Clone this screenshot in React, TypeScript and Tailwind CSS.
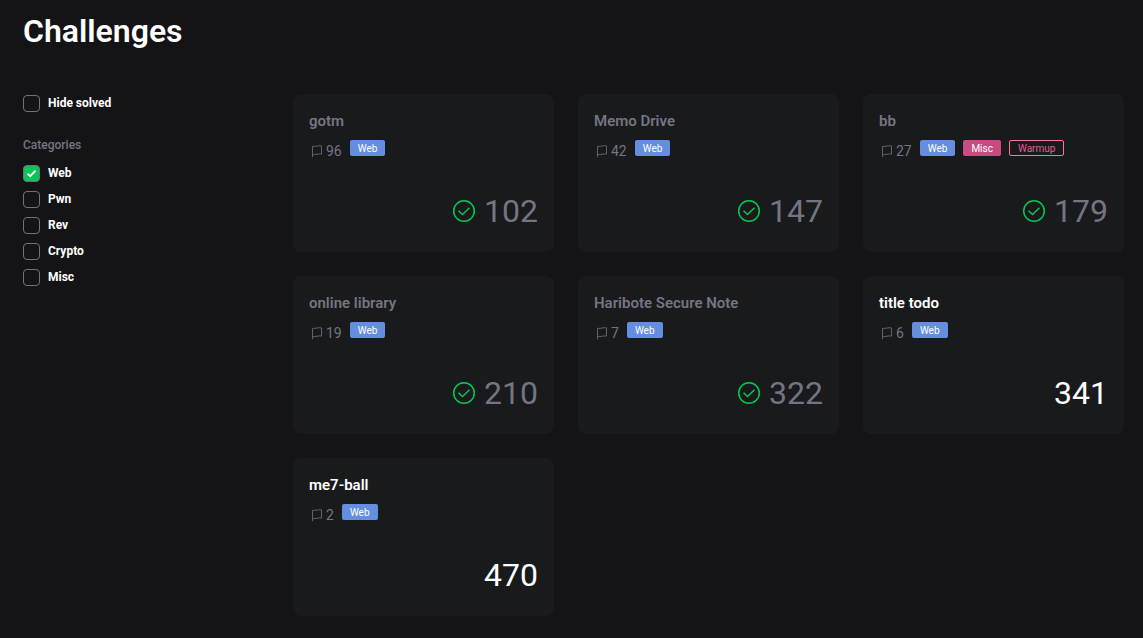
import React, { useState } from "react";

type Challenge = {
  title: string;
  solves: number;
  tags: string[];
  points: number;
  solved: boolean;
};

const categories = ["Web", "Pwn", "Rev", "Crypto", "Misc"];

const challenges: Challenge[] = [
  { title: "gotm", solves: 96, tags: ["Web"], points: 102, solved: true },
  { title: "Memo Drive", solves: 42, tags: ["Web"], points: 147, solved: true },
  { title: "bb", solves: 27, tags: ["Web", "Misc", "Warmup"], points: 179, solved: true },
  { title: "online library", solves: 19, tags: ["Web"], points: 210, solved: true },
  { title: "Haribote Secure Note", solves: 7, tags: ["Web"], points: 322, solved: true },
  { title: "title todo", solves: 6, tags: ["Web"], points: 341, solved: false },
  { title: "me7-ball", solves: 2, tags: ["Web"], points: 470, solved: false },
];

const tagStyles: Record<string, string> = {
  Web: "bg-[#658ee0] text-white",
  Misc: "bg-[#c84b82] text-white",
  Warmup: "border border-[#ff6fae] text-[#e75a9b]",
};

function Checkbox({
  label,
  checked,
  onChange,
}: {
  label: string;
  checked: boolean;
  onChange: (checked: boolean) => void;
}) {
  return (
    <label className="flex h-[18px] cursor-pointer items-center gap-2 text-xs font-bold text-white">
      <span className="grid size-[17px] shrink-0">
        <input
          type="checkbox"
          checked={checked}
          onChange={(e) => onChange(e.target.checked)}
          className="col-start-1 row-start-1 size-[17px] appearance-none rounded-[4px] border border-[#72717d] checked:bg-[#06c755]"
        />
        {checked && (
          <svg
            viewBox="0 0 17 17"
            className="pointer-events-none col-start-1 row-start-1 size-[17px]"
            fill="none"
            stroke="white"
            strokeWidth="2"
            aria-hidden="true"
          >
            <path d="M4.5 8.7 7.3 11.2 12.5 5.6" />
          </svg>
        )}
      </span>
      <span className="pb-px">{label}</span>
    </label>
  );
}

function FlagIcon() {
  return (
    <svg
      viewBox="0 0 16 16"
      className="size-4 shrink-0"
      fill="none"
      stroke="#62626a"
      strokeWidth="1"
      aria-hidden="true"
    >
      <path d="M3.5 14.2V3.3C6.5 3.9 9.5 2.1 12.5 2.9v8.2c-3-.8-6 1-9 .4" />
    </svg>
  );
}

function SolvedIcon() {
  return (
    <svg
      viewBox="0 0 24 24"
      className="size-6 shrink-0"
      fill="none"
      stroke="#06c755"
      strokeWidth="1.5"
      role="img"
      aria-label="Solved"
    >
      <circle cx="12" cy="12" r="10.3" />
      <path d="m6.5 11.7 4 3.8 7-6.7" />
    </svg>
  );
}

function ChallengeCard({ challenge }: { challenge: Challenge }) {
  const { title, solves, tags, points, solved } = challenge;
  const tone = solved ? "text-[#757483]" : "text-white";
  return (
    <article className="flex min-h-[158px] flex-col rounded-lg bg-[#191a1b] p-4">
      <h2 className={`text-[15px] leading-[22px] font-semibold ${tone}`}>{title}</h2>
      <div className="mt-2 flex items-start gap-2">
        <div className="flex items-center gap-px pt-px text-sm text-[#757483]">
          <FlagIcon />
          <span>{solves}</span>
        </div>
        {tags.map((tag) => (
          <span
            key={tag}
            className={`flex h-4 items-center rounded-[2px] px-2 text-[10px] ${tagStyles[tag]}`}
          >
            {tag}
          </span>
        ))}
      </div>
      <div className="mt-auto flex items-center justify-end gap-2 pb-[5px]">
        {solved && <SolvedIcon />}
        <span className={`text-[32px] leading-10 ${tone}`}>{points}</span>
      </div>
    </article>
  );
}

export default function App() {
  const [hideSolved, setHideSolved] = useState(false);
  const [selected, setSelected] = useState<string[]>(["Web"]);

  const toggle = (category: string, on: boolean) =>
    setSelected((prev) => (on ? [...prev, category] : prev.filter((c) => c !== category)));

  const visible = challenges.filter(
    (c) =>
      !(hideSolved && c.solved) &&
      (selected.length === 0 || c.tags.some((t) => selected.includes(t))),
  );

  return (
    <main className="min-h-screen bg-[#141416] pt-2 pr-[19px] pb-5 pl-[23px] font-[Roboto,sans-serif]">
      <h1 className="text-[32px] leading-[46px] font-semibold text-white">Challenges</h1>
      <div className="mt-10 flex">
        <aside className="w-[270px] shrink-0">
          <Checkbox label="Hide solved" checked={hideSolved} onChange={setHideSolved} />
          <fieldset className="mt-6">
            <legend className="text-xs leading-[18px] font-medium text-[#757483]">Categories</legend>
            <div className="mt-2.5 flex flex-col gap-2">
              {categories.map((category) => (
                <Checkbox
                  key={category}
                  label={category}
                  checked={selected.includes(category)}
                  onChange={(on) => toggle(category, on)}
                />
              ))}
            </div>
          </fieldset>
        </aside>
        <section className="grid flex-1 grid-cols-3 gap-6" aria-label="Challenge list">
          {visible.map((c) => (
            <ChallengeCard key={c.title} challenge={c} />
          ))}
        </section>
      </div>
    </main>
  );
}
